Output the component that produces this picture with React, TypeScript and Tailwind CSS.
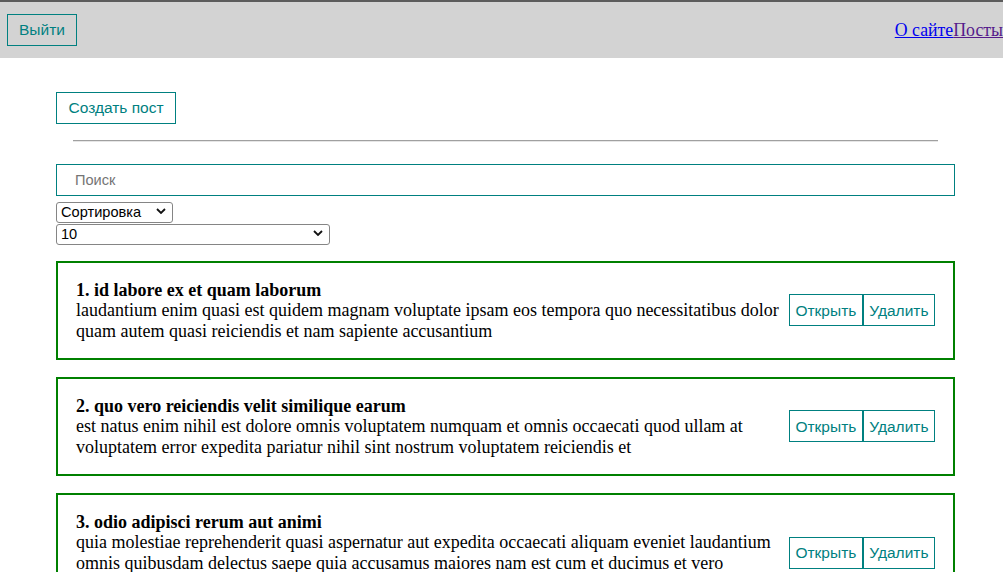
import React from "react";

const posts = [
  {
    id: 1,
    title: "id labore ex et quam laborum",
    body: "laudantium enim quasi est quidem magnam voluptate ipsam eos tempora quo necessitatibus dolor quam autem quasi reiciendis et nam sapiente accusantium",
  },
  {
    id: 2,
    title: "quo vero reiciendis velit similique earum",
    body: "est natus enim nihil est dolore omnis voluptatem numquam et omnis occaecati quod ullam at voluptatem error expedita pariatur nihil sint nostrum voluptatem reiciendis et",
  },
  {
    id: 3,
    title: "odio adipisci rerum aut animi",
    body: "quia molestiae reprehenderit quasi aspernatur aut expedita occaecati aliquam eveniet laudantium omnis quibusdam delectus saepe quia accusamus maiores nam est cum et ducimus et vero voluptates excepturi deleniti ratione",
  },
];

const Chevron = () => (
  <svg width="10" height="7" viewBox="0 0 10 7" className="pointer-events-none absolute right-[7px] top-1/2 -translate-y-1/2">
    <path d="M1 1.5 L5 5.5 L9 1.5" fill="none" stroke="#111" strokeWidth="1.8" />
  </svg>
);

function FakeSelect({ value, width, options }: { value: string; width: string; options: string[] }) {
  return (
    <div className={`relative h-[21px] ${width}`}>
      <select
        defaultValue={value}
        className="h-full w-full appearance-none rounded-[3px] border border-[#858585] bg-white pl-[4px] text-[14.6px] leading-[17px] text-black [font-family:'Liberation_Sans',Arial,sans-serif]"
      >
        {options.map((o) => (
          <option key={o} value={o}>
            {o}
          </option>
        ))}
      </select>
      <Chevron />
    </div>
  );
}

export default function App() {
  return (
    <div className="min-h-[572px] bg-white [font-family:'Liberation_Serif','Times_New_Roman',serif]">
      <div className="flex h-[58px] items-center justify-between border-t-2 border-[#5c5c5c] bg-[#d3d3d3] pl-[7px]">
        <button className="h-[32px] border border-[#008080] px-[11px] text-[15.5px] text-[#008080] [font-family:'Liberation_Sans',Arial,sans-serif]">
          Выйти
        </button>
        <div className="flex text-[17.8px]">
          <a href="#" className="text-[#0000ee] underline">
            О сайте
          </a>
          <a href="#" className="text-[#551a8b] underline">
            Посты
          </a>
        </div>
      </div>

      <div className="ml-[56px] w-[899px] pt-[34px]">
        <button className="h-[32px] border border-[#008080] px-[11.5px] text-[15.5px] text-[#008080] [font-family:'Liberation_Sans',Arial,sans-serif]">
          Создать пост
        </button>
        <div className="mx-[17px] mt-[16px] h-[2px] border-t border-b border-t-[#a0a0a0] border-b-[#e6e6e6]" />
        <input
          placeholder="Поиск"
          className="mt-[22px] block h-[32px] w-full border border-[#008080] pl-[18px] text-[14.6px] placeholder:text-[#757575] [font-family:'Liberation_Sans',Arial,sans-serif]"
        />
        <div className="mt-[4px] flex flex-col gap-[1px]">
          <FakeSelect value="Сортировка" width="w-[117px]" options={["Сортировка", "По названию", "По описанию"]} />
          <FakeSelect value="10" width="w-[274px]" options={["5", "10", "25", "Показать все"]} />
        </div>

        <div className="mt-[18px] flex flex-col gap-[17px]">
          {posts.map((p) => (
            <div key={p.id} className="flex items-center border-2 border-[#008000] px-[18px] py-[17px]">
              <div className="w-[703px] text-[18px] leading-[20.33px] text-black">
                <strong>
                  {p.id}. {p.title}
                </strong>
                <div>{p.body}</div>
              </div>
              <div className="ml-[10px] flex">
                <button className="h-[32px] border border-[#008080] px-[5.5px] text-[15.5px] text-[#008080] [font-family:'Liberation_Sans',Arial,sans-serif]">
                  Открыть
                </button>
                <button className="h-[32px] border border-[#008080] px-[5.5px] text-[15.5px] text-[#008080] [font-family:'Liberation_Sans',Arial,sans-serif]">
                  Удалить
                </button>
              </div>
            </div>
          ))}
        </div>
      </div>
    </div>
  );
}
